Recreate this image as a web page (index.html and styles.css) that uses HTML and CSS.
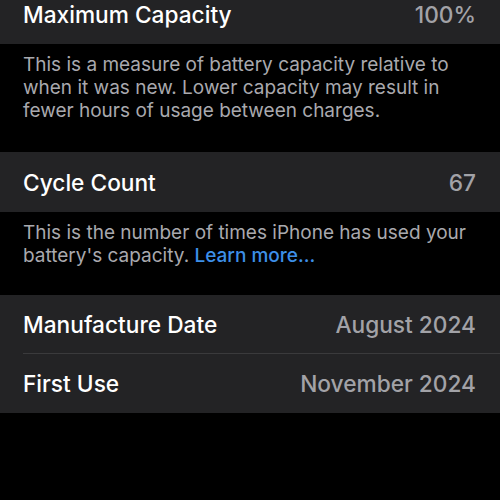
FILE: index.html
```html
<!DOCTYPE html>
<html>

<head>
    <meta charset="UTF-8">
    <meta name="viewport" content="width=device-width, initial-scale=1.0">
    <title>Battery Health</title>
    <link rel="stylesheet" href="styles.css">
</head>

<body>
    <div class="page">
        <!-- 최대 용량 -->
        <div class="group first">
            <div class="cell">
                <span class="title">Maximum Capacity</span>
                <span class="value">100%</span>
            </div>
        </div>
        <p class="footer">This is a measure of battery capacity relative to when it was new. Lower capacity may result in fewer hours of usage between charges.</p>

        <!-- 충전 횟수 -->
        <div class="group">
            <div class="cell">
                <span class="title">Cycle Count</span>
                <span class="value">67</span>
            </div>
        </div>
        <p class="footer short">This is the number of times iPhone has used your battery's capacity. <a class="link" href="#">Learn more...</a></p>

        <!-- 날짜 -->
        <div class="group">
            <div class="cell">
                <span class="title">Manufacture Date</span>
                <span class="value">August 2024</span>
            </div>
            <div class="cell">
                <span class="title">First Use</span>
                <span class="value">November 2024</span>
            </div>
        </div>
    </div>
</body>

</html>
```

FILE: styles.css
```css
* {
    margin: 0;
    padding: 0;
    box-sizing: border-box;
}

body {
    font-family: 'Inter', 'Noto Sans', sans-serif;
    background-color: #000;
    color: #fff;
    height: 100vh;
    overflow: hidden;
}

.page {
    display: flex;
    flex-direction: column;
}

.group {
    background-color: #232325;
}

.group.first {
    margin-top: -16px;
}

.cell {
    height: 59px;
    margin-left: 23px;
    padding-right: 24px;
    display: flex;
    justify-content: space-between;
    align-items: center;
    border-bottom: 1px solid #3a3a3c;
}

.group .cell:last-child {
    border-bottom: none;
}

.group.first .cell,
.group:nth-of-type(2) .cell {
    height: 60px;
}

.title {
    font-size: 22.7px;
    font-weight: 500;
    color: #fff;
}

.value {
    font-size: 22.7px;
    font-weight: 500;
    color: #a2a2a7;
}

.footer {
    font-size: 19px;
    line-height: 23px;
    color: #a9a9ae;
    padding: 9px 30px 30px 23px;
}

.footer.short {
    padding-bottom: 28px;
}

.link {
    color: #3d8fe8;
    font-weight: 500;
    text-decoration: none;
}
```
